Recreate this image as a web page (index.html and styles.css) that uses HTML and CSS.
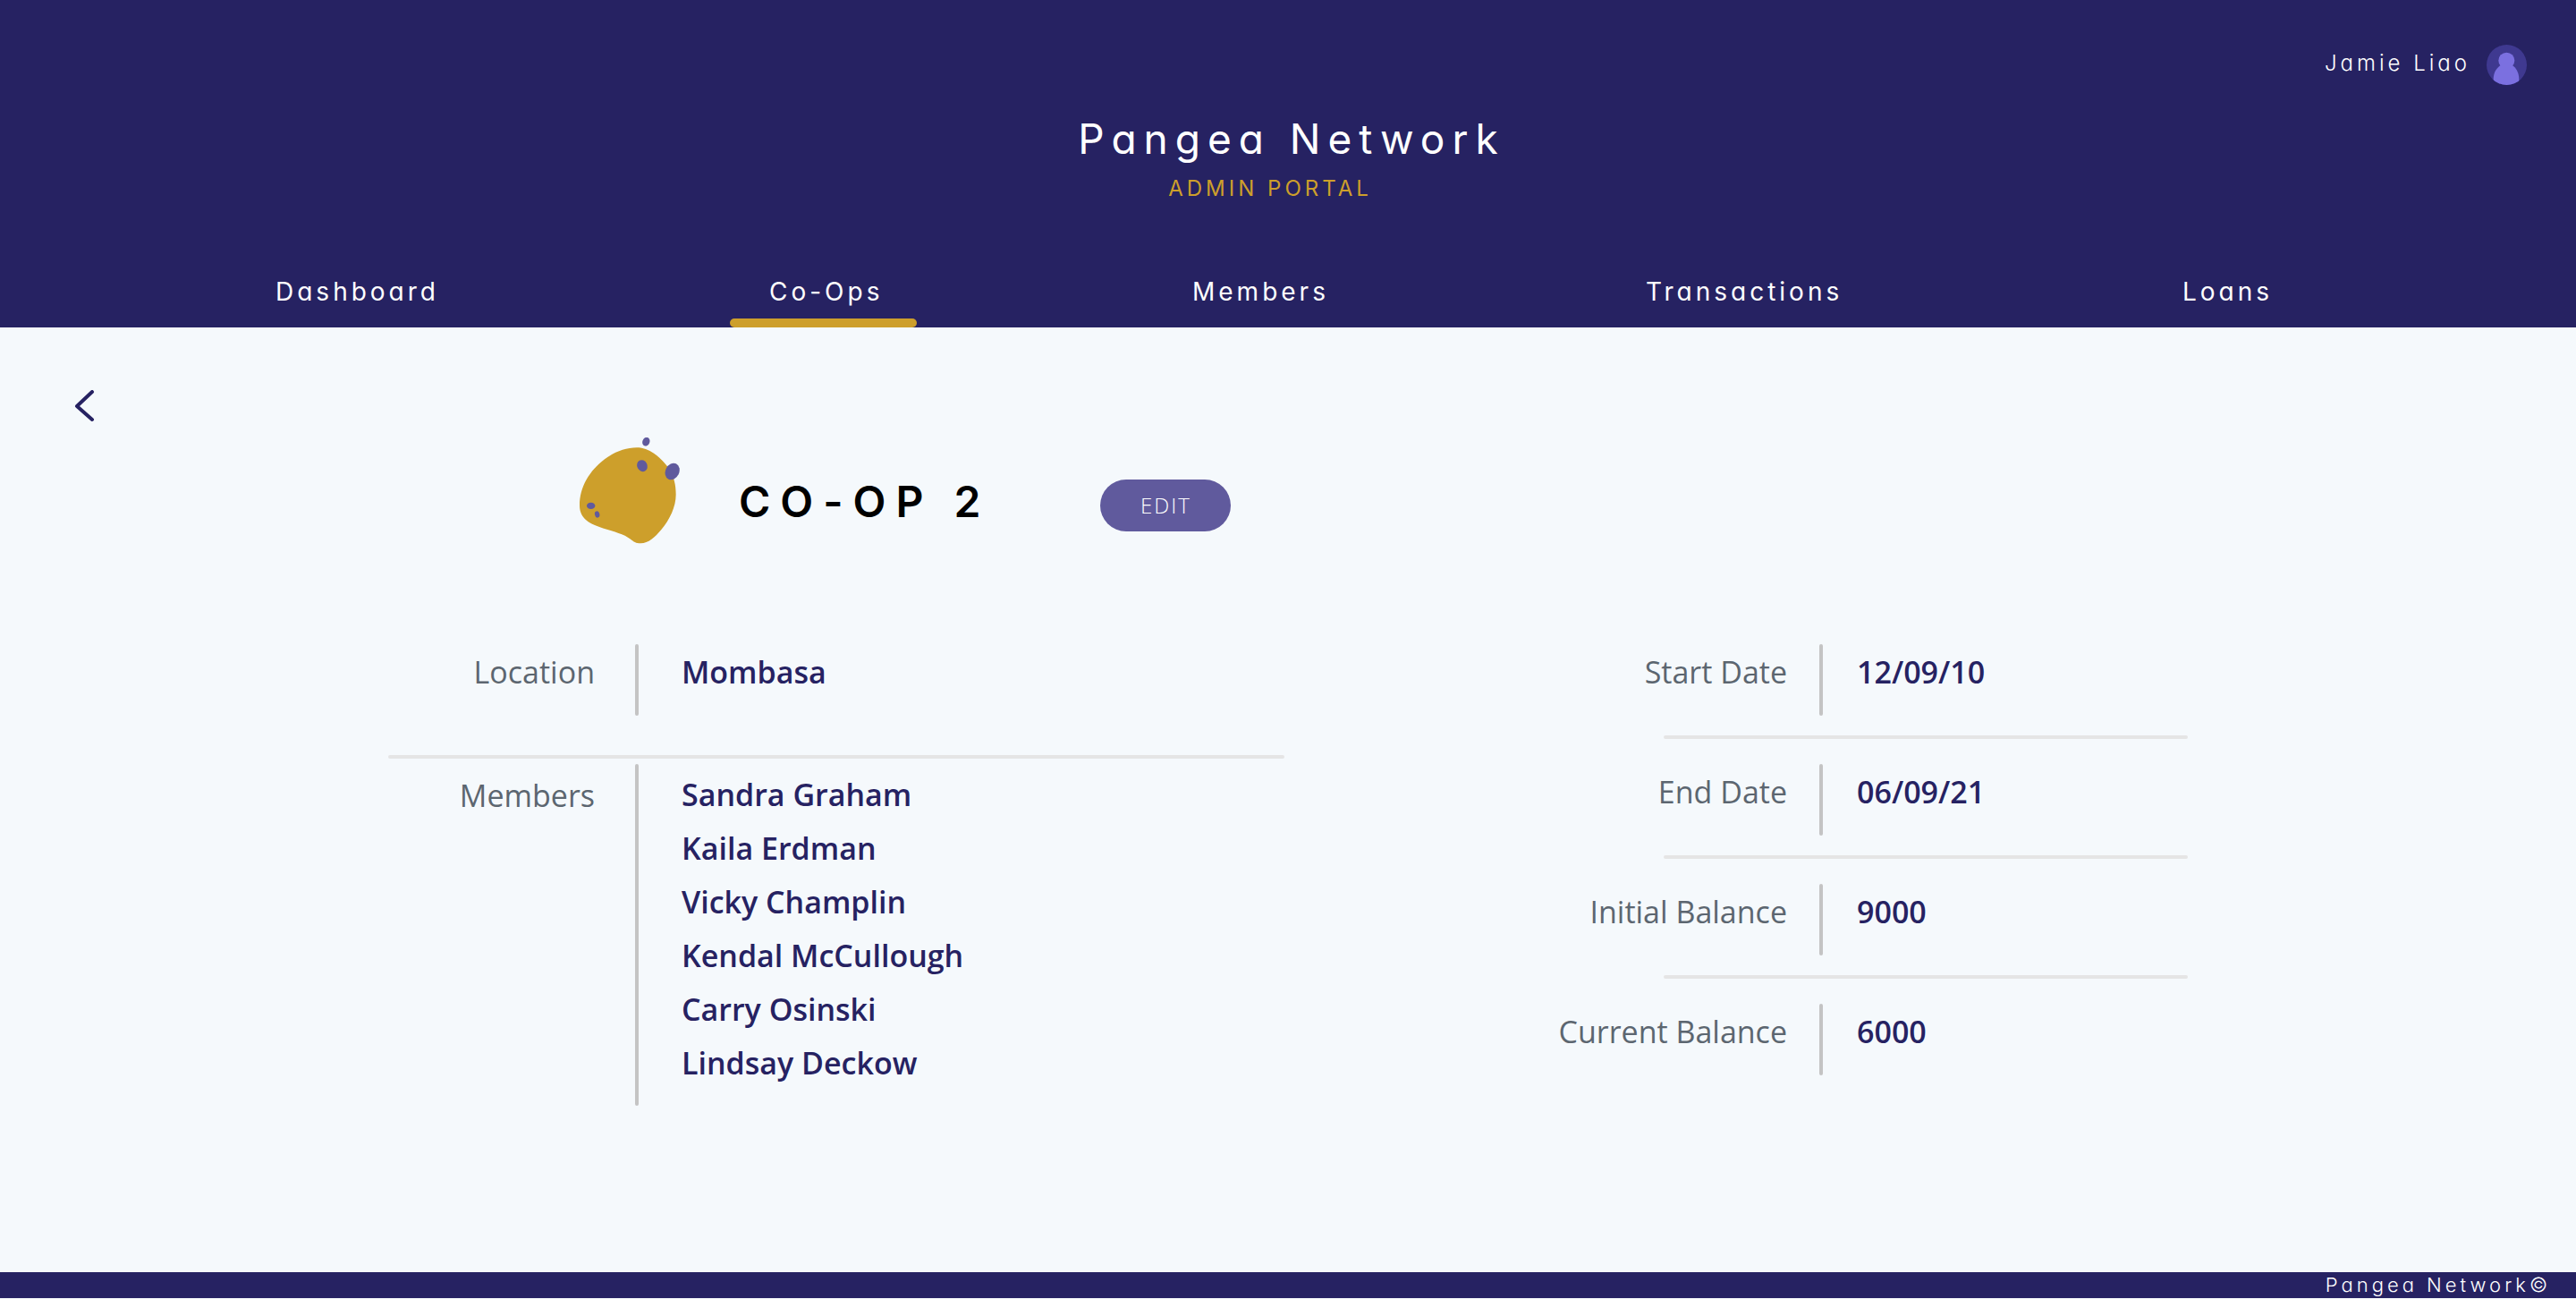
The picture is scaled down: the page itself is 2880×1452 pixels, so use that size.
FILE: index.html
```html
<!DOCTYPE html>
<html lang="en">
<head>
  <meta charset="utf-8">
  <meta name="viewport" content="width=device-width, initial-scale=1">
  <title>Pangea Network – Co-Op 2</title>
  <link rel="stylesheet" href="styles.css">
</head>
<body>
  <header class="header">
    <div class="user">
      <span class="user-name">Jamie Liao</span>
      <svg class="avatar" viewBox="0 0 135 135" aria-hidden="true">
        <clipPath id="avatar-clip"><circle cx="67.500" cy="67.500" r="67.500"/></clipPath>
        <circle cx="67.500" cy="67.500" r="67.500" fill="#3f3990"/>
        <g clip-path="url(#avatar-clip)" fill="#7b70e0">
          <circle cx="67" cy="53" r="27"/>
          <path d="M23 140V116C23 90 36 76 48 68H86C98 76 109 92 109 116V140Z"/>
        </g>
      </svg>
    </div>
    <div class="brand">
      <p class="brand-name">Pangea Network</p>
      <p class="brand-sub">ADMIN PORTAL</p>
    </div>
    <nav class="nav">
      <a class="nav-link" href="#dashboard">Dashboard</a>
      <a class="nav-link nav-link-active" href="#coops" aria-current="page">Co-Ops</a>
      <a class="nav-link" href="#members">Members</a>
      <a class="nav-link" href="#transactions">Transactions</a>
      <a class="nav-link" href="#loans">Loans</a>
    </nav>
  </header>

  <main class="main">
    <a class="back" href="#coops" aria-label="Back to Co-Ops">
      <svg class="back-icon" viewBox="0 0 24 36" aria-hidden="true">
        <path d="M20 2L3 18L20 33" fill="none" stroke="#262262" stroke-width="4" stroke-linecap="round" stroke-linejoin="round"/>
      </svg>
    </a>

    <div class="hero">
      <svg class="hero-logo" viewBox="84 57 336 357" aria-hidden="true">
        <path d="M84 285C84 222 118 168 168 130C205 102 250 87 292 92C325 97 360 128 383 160C401 188 407 218 407 248C407 290 386 332 358 366C337 391 315 412 289 412C273 412 265 406 255 398C232 380 200 373 165 362C120 348 84 330 84 285Z" fill="#cd9f2b"/>
        <g fill="#605a9d">
          <ellipse cx="307" cy="71" rx="12" ry="15" transform="rotate(22 307 71)"/>
          <ellipse cx="294" cy="152" rx="17" ry="20" transform="rotate(-28 294 152)"/>
          <ellipse cx="395" cy="171" rx="23" ry="29" transform="rotate(26 395 171)"/>
          <ellipse cx="122" cy="286" rx="14" ry="11"/>
          <ellipse cx="143" cy="315" rx="8" ry="11" transform="rotate(-14 143 315)"/>
        </g>
      </svg>
      <h1 class="hero-title">CO-OP 2</h1>
      <button class="edit" type="button">EDIT</button>
    </div>

    <div class="details">
      <dl class="panel panel-left">
        <div class="row">
          <dt class="label">Location</dt>
          <dd class="value">Mombasa</dd>
        </div>
        <div class="row row-members">
          <dt class="label">Members</dt>
          <dd class="value">
            <ul class="names">
              <li>Sandra Graham</li>
              <li>Kaila Erdman</li>
              <li>Vicky Champlin</li>
              <li>Kendal McCullough</li>
              <li>Carry Osinski</li>
              <li>Lindsay Deckow</li>
            </ul>
          </dd>
        </div>
      </dl>
      <dl class="panel panel-right">
        <div class="row">
          <dt class="label">Start Date</dt>
          <dd class="value">12/09/10</dd>
        </div>
        <div class="row">
          <dt class="label">End Date</dt>
          <dd class="value">06/09/21</dd>
        </div>
        <div class="row">
          <dt class="label">Initial Balance</dt>
          <dd class="value">9000</dd>
        </div>
        <div class="row">
          <dt class="label">Current Balance</dt>
          <dd class="value">6000</dd>
        </div>
      </dl>
    </div>
  </main>

  <footer class="footer">Pangea Network©</footer>
</body>
</html>
```
FILE: styles.css
```css
* {
  box-sizing: border-box;
}

body {
  display: flex;
  flex-direction: column;
  min-height: 100vh;
  margin: 0;
  padding-bottom: 1px;
  background: #f5f9fc;
  color: #262262;
  font-family: "Open Sans", sans-serif;
}

p, h1, dl, dd, ul {
  margin: 0;
  padding: 0;
}

.header,
.hero-title,
.footer {
  font-family: Inter, sans-serif;
  font-feature-settings: "cv11";
}

.header {
  display: flex;
  flex-direction: column;
  background: #262262;
  color: #fff;
}

.user {
  display: flex;
  align-items: center;
  justify-content: flex-end;
  gap: 18px;
  padding: 50px 55px 0 0;
}

.user-name {
  padding-bottom: 3px;
  font-size: 24px;
  font-weight: 300;
  line-height: 42px;
  letter-spacing: 4px;
}

.avatar {
  width: 45px;
  height: 45px;
}

.brand {
  display: flex;
  flex-direction: column;
  align-items: center;
  padding-top: 30px;
}

.brand-name {
  padding-left: 8px;
  font-size: 46px;
  line-height: 60px;
  letter-spacing: 8px;
}

.brand-sub {
  padding: 6px 40px 0 0;
  color: #cd9f2b;
  font-size: 24px;
  line-height: 40px;
  letter-spacing: 4px;
}

.nav {
  display: grid;
  grid-template-columns: 508fr 517fr 507fr 600fr 440fr;
  justify-items: start;
  padding: 75px 0 0 308px;
}

.nav-link {
  color: #fff;
  font-size: 28px;
  line-height: 40px;
  letter-spacing: 4px;
  text-decoration: none;
  padding-bottom: 20px;
}

.nav-link-active {
  position: relative;
  padding-left: 44px;
  padding-right: 38px;
}

.nav-link-active::after {
  content: "";
  position: absolute;
  left: 0;
  right: 0;
  bottom: 0;
  height: 10px;
  border-radius: 5px;
  background: #cd9f2b;
}

.main {
  flex: 1;
  padding-bottom: 60px;
}

.back {
  display: flex;
  width: 24px;
  margin: 70px 0 0 83px;
}

.back-icon {
  width: 24px;
  height: 36px;
}

.hero {
  display: flex;
  align-items: center;
  padding: 17px 0 0 22.5%;
}

.hero-logo {
  width: 112px;
  height: 119px;
}

.hero-title {
  padding: 24px 0 0 66px;
  color: #000;
  font-size: 48px;
  font-weight: 600;
  line-height: 60px;
  letter-spacing: 11px;
}

.edit {
  width: 146px;
  height: 58px;
  margin: 32px 0 0 123px;
  padding: 0;
  border: 0;
  border-radius: 29px;
  background: #605a9d;
  color: #fff;
  font-family: "Open Sans", sans-serif;
  font-size: 24px;
  font-weight: 300;
  letter-spacing: 2px;
}

.details {
  display: grid;
  grid-template-columns: 1002fr 704fr;
  align-items: start;
  gap: 306px;
  padding: 112px 434px 0;
}

.row {
  position: relative;
  display: grid;
  min-height: 80px;
  font-size: 34px;
  line-height: 46px;
}

.panel-left .row {
  grid-template-columns: 231px 1fr;
  gap: 45px;
}

.panel-right .row {
  grid-template-columns: 256px 1fr;
  gap: 36px;
}

.row + .row {
  margin-top: 54px;
}

/* horizontal rule between two rows */
.row + .row::before {
  content: "";
  position: absolute;
  top: -32px;
  left: 118px;
  right: 0;
  height: 4px;
  border-radius: 2px;
  background: #e5e5e5;
}

.row + .row-members::before {
  top: -10px;
  left: 0;
}

.label {
  padding-top: 8px;
  color: #5c6670;
  text-align: right;
  white-space: nowrap;
}

/* vertical rule between a label and its value */
.value {
  position: relative;
  padding: 8px 0 0 42px;
  font-weight: 600;
}

.panel-left .value {
  padding-left: 52px;
}

.value::before {
  content: "";
  position: absolute;
  top: 0;
  bottom: 0;
  left: 0;
  width: 4px;
  border-radius: 2px;
  background: #c4c4c4;
}

.row-members .label {
  padding-top: 12px;
}

.row-members .value {
  padding-top: 4px;
  padding-bottom: 18px;
}

.names {
  list-style: none;
  line-height: 60px;
}

.footer {
  padding-right: 28px;
  background: #262262;
  color: #fff;
  font-size: 22px;
  font-weight: 300;
  line-height: 29px;
  letter-spacing: 4px;
  text-align: right;
}
```
